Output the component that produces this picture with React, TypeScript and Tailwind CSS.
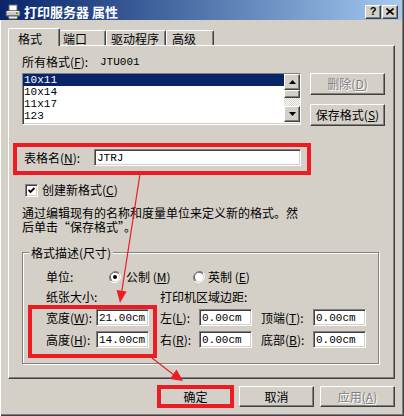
import React from "react";

const raised =
  "border-t border-l border-r border-b border-t-white border-l-white border-r-[#404040] border-b-[#404040] shadow-[inset_-1px_-1px_0_#808080]";
const sunken =
  "border-t border-l border-r border-b border-t-[#808080] border-l-[#808080] border-r-white border-b-white shadow-[inset_1px_1px_0_#404040,inset_-1px_-1px_0_#d4d0c8]";
const disabledText = "text-[#808080] [text-shadow:1px_1px_0_#ffffff]";
const red = "#ec1c24";

function PrinterIcon() {
  return (
    <svg width="16" height="16" viewBox="0 0 16 16">
      <rect x="4" y="1" width="8" height="6" fill="#fff" stroke="#6b6b6b" strokeWidth="1" />
      <path d="M1 7h14v5H1z" fill="#c9c9c9" stroke="#4a4a4a" strokeWidth="1" />
      <path d="M3 12h10l-1 3H4z" fill="#e8e8e8" stroke="#5a5a5a" strokeWidth="1" />
      <rect x="11" y="8.5" width="2" height="1.5" fill="#2e9a2e" />
      <path d="M2 7.5h12" stroke="#f2f2f2" strokeWidth="1" />
    </svg>
  );
}

function Radio({ checked }: { checked?: boolean }) {
  return (
    <svg width="12" height="12" viewBox="0 0 12 12" className="shrink-0">
      <path d="M10.2 1.8A6 6 0 0 0 1.8 10.2" fill="none" stroke="#808080" strokeWidth="1" />
      <path d="M9.5 2.5A5 5 0 0 0 2.5 9.5" fill="none" stroke="#404040" strokeWidth="1" />
      <path d="M1.8 10.2A6 6 0 0 0 10.2 1.8" fill="none" stroke="#ffffff" strokeWidth="1" />
      <circle cx="6" cy="6" r="4.2" fill="#fff" />
      {checked && <circle cx="6" cy="6" r="2" fill="#000" />}
    </svg>
  );
}

function Field({ value, w = 53 }: { value: string; w?: number }) {
  return (
    <div
      className={`${sunken} bg-white h-[17px] flex items-center pl-[2px] overflow-hidden font-['Liberation_Mono',monospace] text-[11px] text-black`}
      style={{ width: w }}
    >
      {value}
    </div>
  );
}

function Btn({ children, disabled, isDefault }: { children: React.ReactNode; disabled?: boolean; isDefault?: boolean }) {
  return (
    <div
      className={`w-[75px] h-[21px] flex items-center justify-center bg-[#d4d0c8] ${raised} ${
        isDefault ? "outline outline-1 outline-black" : ""
      } ${disabled ? disabledText : "text-black"}`}
    >
      {children}
    </div>
  );
}

const Mn = ({ c }: { c: string }) => (
  <span>
    (<u>{c}</u>)
  </span>
);

export default function App() {
  return (
    <div className="relative w-[404px] h-[416px] overflow-hidden bg-[#d4d0c8] font-['Noto_Sans_CJK_SC',sans-serif] text-[12px] leading-[14px] text-black shadow-[inset_1px_0_0_#ffffff,inset_-1px_-1px_0_#404040,inset_-2px_-2px_0_#808080]">
      {/* title bar */}
      <div className="mr-[2px] h-[20px] flex items-center pl-[5px] pt-[3px] bg-gradient-to-r from-[#0a246a] to-[#a6caf0]">
        <PrinterIcon />
        <span className="ml-[3px] text-white font-bold text-[13px] leading-[16px]">打印服务器 属性</span>
        <div className="ml-auto flex gap-[1px] mr-[4px]">
          <div className={`w-[16px] h-[14px] bg-[#d4d0c8] ${raised} flex items-center justify-center font-['Liberation_Sans',sans-serif] font-bold text-[11px] leading-none`}>
            ?
          </div>
          <div className={`w-[16px] h-[14px] bg-[#d4d0c8] ${raised} flex items-center justify-center`}>
            <svg width="8" height="7" viewBox="0 0 8 7">
              <path d="M0.5 0.5L7.5 6.5M7.5 0.5L0.5 6.5" stroke="#000" strokeWidth="1.6" />
            </svg>
          </div>
        </div>
      </div>

      {/* tabs */}
      <div className="flex items-end h-[25px] pl-[8px]">
        <div className="relative z-10 -mb-px h-[18px] w-[52px] pl-[9px] pt-[3px] bg-[#d4d0c8] border-t border-l border-r border-t-white border-l-white border-r-[#404040] rounded-t-[2px] shadow-[inset_-1px_0_0_#808080]">
          格式
        </div>
        <div className="h-[15px] w-[46px] pl-[3px] pt-[1px] border-t border-r border-t-white border-r-[#404040] rounded-t-[2px] shadow-[inset_-1px_0_0_#808080]">
          端口
        </div>
        <div className="h-[15px] w-[60px] pl-[4px] pt-[1px] border-t border-l border-r border-t-white border-l-white border-r-[#404040] rounded-t-[2px] shadow-[inset_-1px_0_0_#808080]">
          驱动程序
        </div>
        <div className="h-[15px] w-[48px] pl-[5px] pt-[1px] border-t border-l border-r border-t-white border-l-white border-r-[#404040] rounded-t-[2px] shadow-[inset_-1px_0_0_#808080]">
          高级
        </div>
      </div>

      {/* tab panel */}
      <div className="ml-[8px] w-[387px] h-[334px] flex flex-col pl-[13px] border-t border-l border-r border-b border-t-white border-l-white border-r-[#404040] border-b-[#404040] shadow-[inset_-1px_-1px_0_#808080]">
        <div className="mt-[9px] h-[14px] flex">
          <span className="w-[78px]">
            所有格式<Mn c="F" />:
          </span>
          <span className="font-['Liberation_Mono',monospace] text-[11px]">JTU001</span>
        </div>

        <div className="mt-[4px] flex">
          <div className={`${sunken} w-[279px] h-[52px] bg-white flex`}>
            <div className="flex-1 flex flex-col font-['Liberation_Mono',monospace] text-[11px] leading-[12px]">
              <div className="h-[12px] bg-[#0a246a] text-white pl-[1px]">10x11</div>
              <div className="h-[12px] pl-[1px]">10x14</div>
              <div className="h-[12px] pl-[1px]">11x17</div>
              <div className="h-[12px] pl-[1px]">123</div>
            </div>
            <div className="w-[16px] flex flex-col">
              <div className={`h-[16px] bg-[#d4d0c8] ${raised} flex items-center justify-center`}>
                <svg width="7" height="4" viewBox="0 0 7 4">
                  <path d="M3.5 0L7 4H0z" fill="#000" />
                </svg>
              </div>
              <div className={`h-[8px] bg-[#d4d0c8] ${raised}`} />
              <div className="h-[8px] bg-[repeating-conic-gradient(#ffffff_0_25%,#d4d0c8_0_50%)] bg-[length:2px_2px]" />
              <div className={`h-[16px] bg-[#d4d0c8] ${raised} flex items-center justify-center`}>
                <svg width="7" height="4" viewBox="0 0 7 4">
                  <path d="M0 0H7L3.5 4z" fill="#000" />
                </svg>
              </div>
            </div>
          </div>
          <div className="ml-[9px] flex flex-col gap-[9px]">
            <div className={`w-[75px] h-[22px] flex items-center justify-center ${raised} ${disabledText}`}>
              删除 <Mn c="D" />
            </div>
            <div className={`w-[75px] h-[22px] flex items-center justify-center ${raised}`}>
              保存格式 <Mn c="S" />
            </div>
          </div>
        </div>

        <div className="mt-[23px] flex items-center">
          <span className="w-[72px] pl-[2px]">
            表格名<Mn c="N" />:
          </span>
          <Field value="JTRJ" w={207} />
        </div>

        <div className="mt-[17px] flex items-center">
          <div className={`ml-[3px] w-[13px] h-[13px] bg-white ${sunken} flex items-center justify-center`}>
            <svg width="7" height="7" viewBox="0 0 7 7">
              <path d="M0.5 3L2.5 5L6.5 1" fill="none" stroke="#000" strokeWidth="1.8" />
            </svg>
          </div>
          <span className="ml-[4px]">
            创建新格式<Mn c="C" />
          </span>
        </div>

        <p className="mt-[9px] w-[280px]">
          通过编辑现有的名称和度量单位来定义新的格式。然后单击“保存格式”。
        </p>

        {/* group box */}
        <div className="relative mt-[18px] w-[357px] h-[112px] border border-[#808080] shadow-[inset_1px_1px_0_#ffffff,1px_1px_0_#ffffff] flex flex-col pl-[23px]">
          <span className="absolute -top-[7px] left-[6px] px-[2px] bg-[#d4d0c8]">格式描述(尺寸)</span>

          <div className="mt-[17px] h-[14px] flex items-center">
            <span className="w-[63px]">单位:</span>
            <Radio checked />
            <span className="ml-[5px] w-[67px]">
              公制 <Mn c="M" />
            </span>
            <Radio />
            <span className="ml-[3px]">
              英制 <Mn c="E" />
            </span>
          </div>

          <div className="mt-[6px] h-[14px] flex">
            <span className="w-[114px]">纸张大小:</span>
            <span>打印机区域边距:</span>
          </div>

          <div className="mt-[5px] flex items-center">
            <span className="w-[50px]">
              宽度<Mn c="W" />:
            </span>
            <Field value="21.00cm" />
            <span className="ml-[11px] w-[39px]">
              左<Mn c="L" />:
            </span>
            <Field value="0.00cm" />
            <span className="ml-[9px] w-[52px]">
              顶端<Mn c="T" />:
            </span>
            <Field value="0.00cm" />
          </div>

          <div className="mt-[5px] flex items-center">
            <span className="w-[50px]">
              高度<Mn c="H" />:
            </span>
            <Field value="14.00cm" />
            <span className="ml-[11px] w-[39px]">
              右<Mn c="R" />:
            </span>
            <Field value="0.00cm" />
            <span className="ml-[9px] w-[52px]">
              底部<Mn c="B" />:
            </span>
            <Field value="0.00cm" />
          </div>
        </div>
      </div>

      {/* dialog buttons */}
      <div className="mt-[7px] pl-[158px] flex gap-[6px]">
        <Btn isDefault>确定</Btn>
        <Btn>取消</Btn>
        <Btn disabled>
          应用 <Mn c="A" />
        </Btn>
      </div>

      {/* red annotations */}
      <div className="absolute left-[13px] top-[143px] w-[298px] h-[32px] border-[4px] border-[#ec1c24] pointer-events-none" />
      <div className="absolute left-[28px] top-[305px] w-[129px] h-[53px] border-[4px] border-[#ec1c24] pointer-events-none" />
      <div className="absolute left-[157px] top-[385px] w-[77px] h-[23px] border-[4px] border-[#ec1c24] pointer-events-none" />
      <svg className="absolute left-0 top-0 pointer-events-none" width="404" height="416">
        <line x1="140" y1="174" x2="121.7" y2="292" stroke={red} strokeWidth="1.2" />
        <polygon points="120,303 126.6,291.5 116.6,290" fill={red} />
        <line x1="152" y1="358" x2="174" y2="375" stroke={red} strokeWidth="1.2" />
        <polygon points="183,381 170,379 176.5,369.5" fill={red} />
      </svg>
    </div>
  );
}
